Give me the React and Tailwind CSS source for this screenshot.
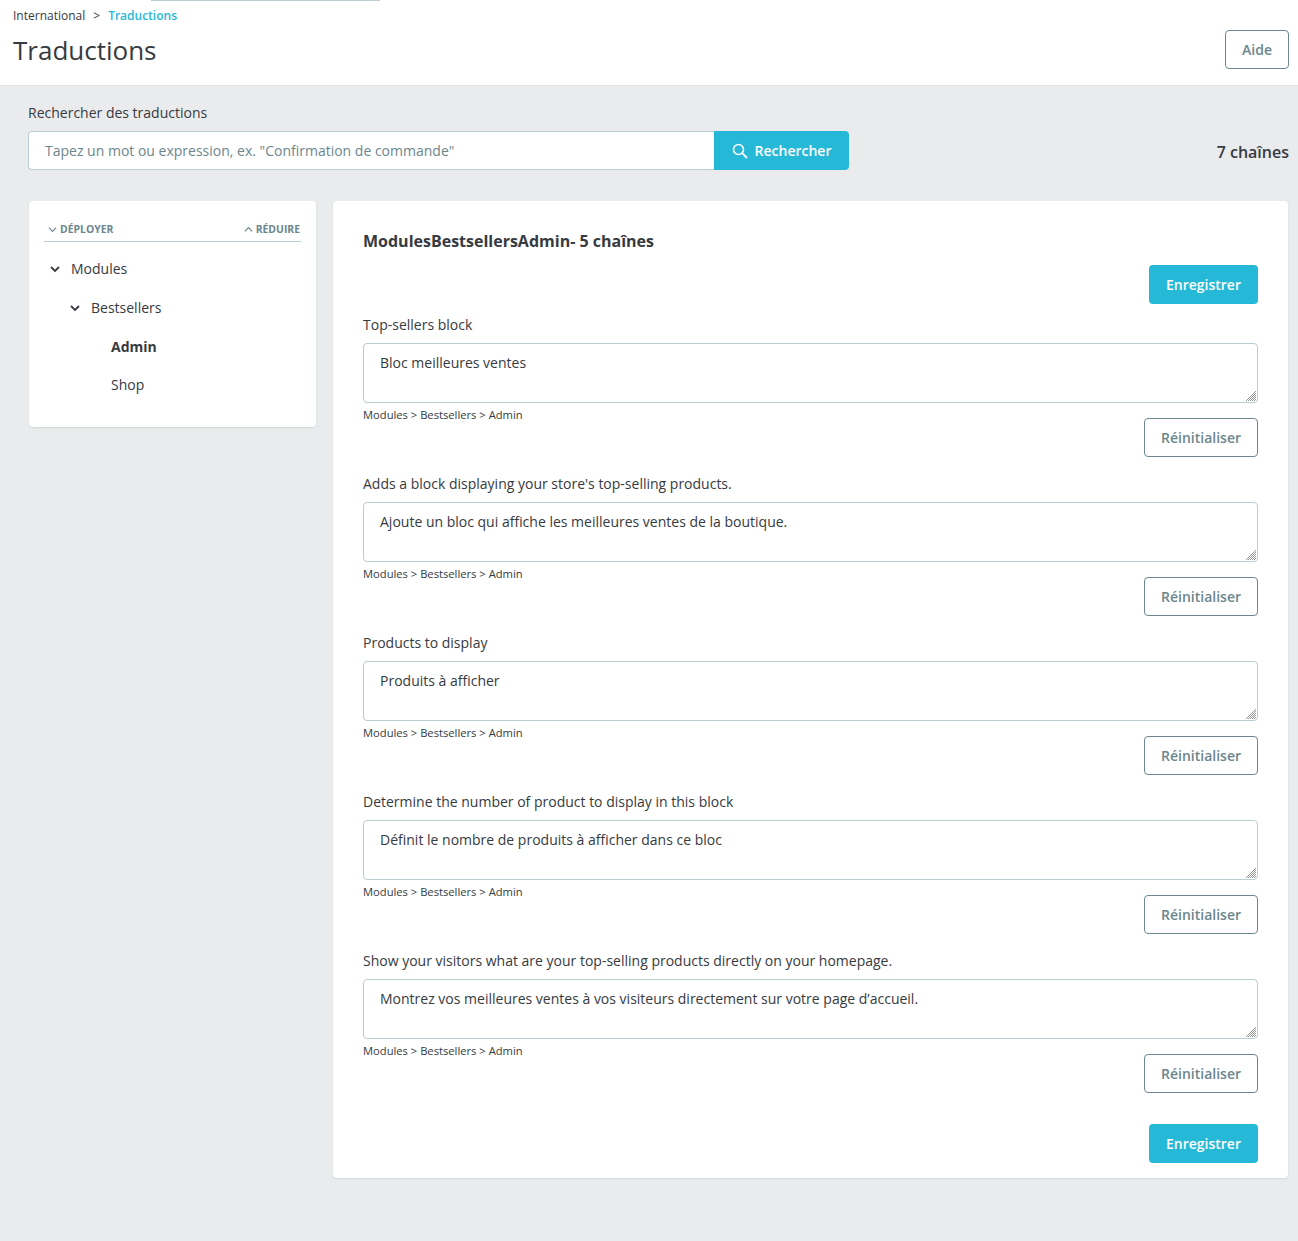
import React from "react";

const rows = [
  ["Top-sellers block", "Bloc meilleures ventes"],
  ["Adds a block displaying your store's top-selling products.", "Ajoute un bloc qui affiche les meilleures ventes de la boutique."],
  ["Products to display", "Produits à afficher"],
  ["Determine the number of product to display in this block", "Définit le nombre de produits à afficher dans ce bloc"],
  ["Show your visitors what are your top-selling products directly on your homepage.", "Montrez vos meilleures ventes à vos visiteurs directement sur votre page d’accueil."],
];

function Chevron({ up, size = 10, sw = 2, className = "" }) {
  return (
    <svg width={size} height={size} viewBox="0 0 10 10" fill="none" className={className}>
      <path d={up ? "M1 7 L5 3 L9 7" : "M1 3 L5 7 L9 3"} stroke="currentColor" strokeWidth={sw} />
    </svg>
  );
}

function Row({ label, value }) {
  return (
    <div className="mb-[17px]">
      <div className="h-[19px] leading-[19px] mb-[9px] text-[14px] text-[#363a41]">{label}</div>
      <div className="relative">
        <textarea
          readOnly
          defaultValue={value}
          className="block w-full h-[60px] resize-none border border-[#bbcdd2] rounded-[4px] px-[16px] py-[8px] text-[14px] leading-[21px] text-[#363a41] bg-white outline-none"
        />
        <svg width="12" height="12" viewBox="0 0 12 12" className="absolute right-[1px] bottom-[1px]">
          <path d="M1 11 L11 1 M3 11 L11 3 M5 11 L11 5 M7 11 L11 7 M9 11 L11 9" stroke="#7a7a7a" strokeWidth="0.8" />
        </svg>
      </div>
      <div className="h-[15px] leading-[15px] mt-[4px] text-[11.2px] text-[#363a41]">Modules &gt; Bestsellers &gt; Admin</div>
      <div className="flex justify-end -mt-[4px]">
        <button className="h-[39px] w-[114px] border border-[#6c868e] rounded-[4px] bg-white text-[14px] font-semibold text-[#6c868e]">Réinitialiser</button>
      </div>
    </div>
  );
}

function Save() {
  return (
    <div className="flex justify-end">
      <button className="h-[39px] w-[109px] rounded-[4px] bg-[#25b9d7] text-[14px] font-semibold text-white">Enregistrer</button>
    </div>
  );
}

export default function App() {
  return (
    <div className="relative min-h-[1241px] bg-[#eaebed] font-['Open_Sans',sans-serif] text-[#363a41]">
      <div className="absolute left-[151px] top-0 w-[229px] h-px bg-[#bbcdd2]"></div>
      <header className="h-[86px] bg-white border-b border-[#dfe3e5] pl-[13px] pr-[9px] flex justify-between">
        <div>
          <div className="flex items-center h-[16px] mt-[8px] text-[12px] leading-[16px]">
            <span>International</span>
            <span className="ml-[8px] mr-[8px]">&gt;</span>
            <span className="text-[#25b9d7] font-semibold">Traductions</span>
          </div>
          <h1 className="mt-[7px] text-[26px] leading-[38px] font-normal text-[#363a41]">Traductions</h1>
        </div>
        <button className="mt-[30px] h-[39px] w-[64px] border border-[#6c868e] rounded-[4px] text-[14px] font-semibold text-[#6c868e]">Aide</button>
      </header>

      <main className="pl-[28px] pr-[9px]">
        <div className="flex justify-between items-start pt-[17px]">
          <div>
            <div className="h-[19px] leading-[19px] text-[14px] mb-[9px]">Rechercher des traductions</div>
            <div className="flex w-[821px] h-[39px]">
              <div className="flex-1 border border-r-0 border-[#bbcdd2] rounded-l-[4px] bg-white pl-[16px] text-[14px] leading-[37px] text-[#6c868e]">
                Tapez un mot ou expression, ex. "Confirmation de commande"
              </div>
              <button className="w-[135px] flex items-center justify-center gap-[7px] bg-[#25b9d7] rounded-r-[4px] text-white text-[14px] font-semibold">
                <svg width="16" height="16" viewBox="0 0 16 16" fill="none">
                  <circle cx="6.5" cy="6.5" r="5" stroke="currentColor" strokeWidth="1.6" />
                  <path d="M10.2 10.2 L15 15" stroke="currentColor" strokeWidth="1.8" />
                </svg>
                Rechercher
              </button>
            </div>
          </div>
          <div className="mt-[38px] text-[16px] font-semibold leading-[22px]">7 chaînes</div>
        </div>

        <div className="flex items-start gap-[17px] mt-[31px] ml-[1px]">
          <aside className="w-[287px] h-[226px] bg-white rounded-[4px] shadow-[0_1px_2px_rgba(108,134,142,0.2)] pt-[20px] px-[15px]">
            <div className="flex justify-between items-center h-[21px] border-b border-[#bbcdd2] pl-[4px] pr-[1px] text-[10.4px] font-bold text-[#6c868e] pb-[3px]">
              <span className="flex items-center gap-[3px]"><Chevron size={9} sw={1.3} />DÉPLOYER</span>
              <span className="flex items-center gap-[3px]"><Chevron up size={9} sw={1.3} />RÉDUIRE</span>
            </div>
            <div className="text-[14px] mt-[7px]">
              <div className="h-[39px] flex items-center pl-[6px] gap-[11px]"><Chevron size={10} sw={1.8} />Modules</div>
              <div className="h-[39px] flex items-center pl-[26px] gap-[11px]"><Chevron size={10} sw={1.8} />Bestsellers</div>
              <div className="h-[39px] flex items-center pl-[67px] font-bold">Admin</div>
              <div className="h-[36px] flex items-center pl-[67px]">Shop</div>
            </div>
          </aside>

          <section className="w-[955px] h-[977px] bg-white rounded-[4px] shadow-[0_1px_2px_rgba(108,134,142,0.2)] px-[30px] pt-[29px]">
            <h2 className="h-[22px] leading-[22px] text-[16px] font-bold mb-[13px]">ModulesBestsellersAdmin- 5 chaînes</h2>
            <Save />
            <div className="mt-[11px]">
              {rows.map(([l, v]) => <Row key={l} label={l} value={v} />)}
            </div>
            <div className="mt-[31px]"><Save /></div>
          </section>
        </div>
      </main>
    </div>
  );
}
